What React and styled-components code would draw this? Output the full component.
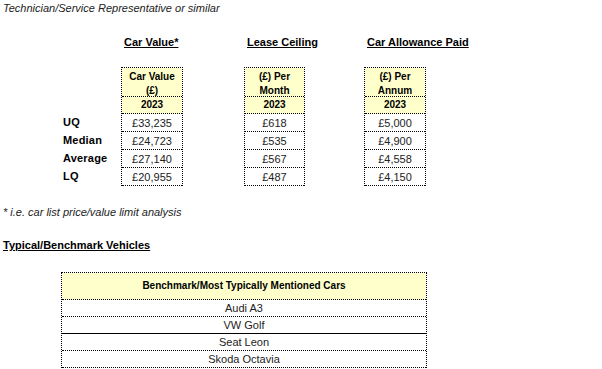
import React from "react";
import styled, { createGlobalStyle } from "styled-components";

const Global = createGlobalStyle`
  html, body { margin: 0; padding: 0; background: #fff; }
  body { font-family: "Liberation Sans", Arial, sans-serif; color: #000; }
`;

const Page = styled.div`
  width: 602px;
  box-sizing: border-box;
  padding: 2px 3px 0;
`;

const Title = styled.div`
  font-style: italic;
  font-size: 11px;
  line-height: 13px;
  color: #222;
`;

const Section = styled.div`
  display: flex;
  margin-top: 21px;
  padding-left: 60px;
`;

const LabelCol = styled.div`
  width: 58px;
  display: flex;
  flex-direction: column;
  padding-top: 78px;
`;

const Label = styled.div`
  height: 18px;
  line-height: 17px;
  font-size: 11px;
  font-weight: bold;
  letter-spacing: 0.2px;
`;

const Block = styled.div`
  width: ${(p) => p.$w}px;
  margin-left: ${(p) => p.$offset || 0}px;
  display: flex;
  flex-direction: column;
`;

const Heading = styled.div`
  font-size: 11px;
  font-weight: bold;
  line-height: 13px;
  text-decoration: underline;
  text-underline-offset: 1px;
  white-space: nowrap;
  padding-left: 3px;
`;

const Table = styled.div`
  margin-top: 18px;
  border: 1px dotted #000;
  border-bottom: none;
`;

const HeadCell = styled.div`
  height: 26px;
  padding-top: 2px;
  line-height: 13.5px;
  background: #ffffcc;
  border-bottom: 1px dotted #000;
  text-align: center;
  font-size: 10px;
  font-weight: bold;
`;

const YearCell = styled.div`
  height: 16px;
  line-height: 16px;
  background: #ffffcc;
  border-bottom: 1px dotted #000;
  text-align: center;
  font-size: 10px;
  font-weight: bold;
`;

const DataCell = styled.div`
  height: 17px;
  line-height: 18px;
  border-bottom: 1px dotted #000;
  text-align: center;
  font-size: 11px;
  color: #222;
`;

const Footnote = styled.div`
  margin-top: 20px;
  font-style: italic;
  font-size: 11px;
  line-height: 13px;
  color: #222;
`;

const SubHeading = styled.div`
  margin-top: 20px;
  font-size: 11px;
  font-weight: bold;
  line-height: 13px;
  text-decoration: underline;
  text-underline-offset: 1px;
`;

const BenchTable = styled.div`
  margin: 20px 0 0 58px;
  width: 366px;
  box-sizing: border-box;
  border: 1px dotted #000;
  border-bottom: none;
`;

const BenchHead = styled.div`
  height: 26px;
  line-height: 26px;
  background: #ffffcc;
  border-bottom: 1px dotted #000;
  text-align: center;
  font-size: 10px;
  font-weight: bold;
`;

const BenchRow = styled.div`
  height: 16px;
  line-height: 17px;
  border-bottom: 1px ${(p) => (p.$solid ? "solid" : "dotted")} #000;
  text-align: center;
  font-size: 11px;
  color: #222;
`;

const labels = ["UQ", "Median", "Average", "LQ"];

const blocks = [
  { title: "Car Value*", w: 62, offset: 0, head: ["Car Value", "(£)"], values: ["£33,235", "£24,723", "£27,140", "£20,955"] },
  { title: "Lease Ceiling", w: 61, offset: 61, head: ["(£) Per", "Month"], values: ["£618", "£535", "£567", "£487"] },
  { title: "Car Allowance Paid", w: 62, offset: 59, head: ["(£) Per", "Annum"], values: ["£5,000", "£4,900", "£4,558", "£4,150"] },
];

const cars = ["Audi A3", "VW Golf", "Seat Leon", "Skoda Octavia"];

export default function App() {
  return (
    <Page>
      <Global />
      <Title>Technician/Service Representative or similar</Title>
      <Section>
        <LabelCol>
          {labels.map((l) => (
            <Label key={l}>{l}</Label>
          ))}
        </LabelCol>
        {blocks.map((b) => (
          <Block key={b.title} $w={b.w} $offset={b.offset}>
            <Heading>{b.title}</Heading>
            <Table>
              <HeadCell>
                {b.head[0]}
                <br />
                {b.head[1]}
              </HeadCell>
              <YearCell>2023</YearCell>
              {b.values.map((v) => (
                <DataCell key={v}>{v}</DataCell>
              ))}
            </Table>
          </Block>
        ))}
      </Section>
      <Footnote>* i.e. car list price/value limit analysis</Footnote>
      <SubHeading>Typical/Benchmark Vehicles</SubHeading>
      <BenchTable>
        <BenchHead>Benchmark/Most Typically Mentioned Cars</BenchHead>
        {cars.map((c, i) => (
          <BenchRow key={c} $solid={i === 1}>
            {c}
          </BenchRow>
        ))}
      </BenchTable>
    </Page>
  );
}
